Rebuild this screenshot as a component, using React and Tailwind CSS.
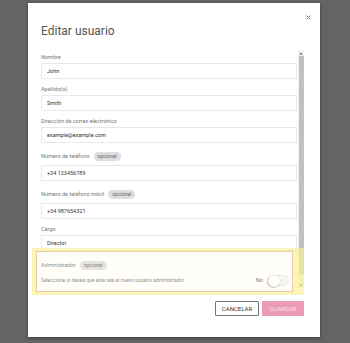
import React from "react";

function Badge() {
  return (
    <span className="ml-[4px] inline-flex h-[9px] items-center rounded-full bg-[#dedede] px-[4px] text-[5px] leading-none text-[#666]">
      opcional
    </span>
  );
}

function Field({ label, value, optional, first }) {
  return (
    <div className={first ? "" : "mt-[6px]"}>
      <div
        className={`flex items-center text-[5.5px] text-[#777] ${
          optional ? "h-[14px]" : "h-[8px]"
        }`}
      >
        {label}
        {optional && <Badge />}
      </div>
      <div className="mt-[2px] flex h-[16px] items-center border border-[#e8e8e8] px-[5px] text-[5.5px] text-[#333]">
        {value}
      </div>
    </div>
  );
}

function ScrollBar() {
  return (
    <div className="flex w-[6px] shrink-0 flex-col bg-[#f1f1f1]">
      <div className="flex h-[6px] items-center justify-center">
        <svg width="4" height="3" viewBox="0 0 4 3">
          <path d="M2 0.5L3.5 2.5H0.5Z" fill="#505050" />
        </svg>
      </div>
      <div className="flex flex-1 flex-col px-[0.5px]">
        <div className="h-[219px] bg-[#c1c1c1]" />
      </div>
      <div className="flex h-[6px] items-center justify-center">
        <svg width="4" height="3" viewBox="0 0 4 3">
          <path d="M2 2.5L3.5 0.5H0.5Z" fill="#505050" />
        </svg>
      </div>
    </div>
  );
}

export default function App() {
  return (
    <div className="min-h-[343px] bg-[#636466] pl-[28px] pt-[3px] font-['Roboto',sans-serif]">
      <div className="relative flex h-[334px] w-[292px] flex-col bg-white pl-[13px] pr-[16px] pt-[21px] shadow-[0_1px_3px_rgba(0,0,0,0.4)]">
        <button className="absolute right-[9px] top-[11px] flex h-[6px] w-[6px] items-center justify-center">
          <svg width="5" height="5" viewBox="0 0 5 5">
            <path d="M0.5 0.5L4.5 4.5M4.5 0.5L0.5 4.5" stroke="#a8627a" strokeWidth="1" />
          </svg>
        </button>

        <h2 className="text-[12px] font-normal leading-[14px] text-[#555]">Editar usuario</h2>

        <div className="mt-[12px] flex h-[238px] gap-[1px]">
          <div className="min-w-0 flex-1 overflow-hidden pt-[3px]">
            <Field first label="Nombre" value="John" />
            <Field label="Apellido(s)" value="Smith" />
            <Field label="Dirección de correo electrónico" value="example@example.com" />
            <Field label="Número de teléfono" value="+34 123456789" optional />
            <Field label="Número de teléfono móvil" value="+34 987654321" optional />
            <Field label="Cargo" value="Director" />

            <div className="mt-[7px] pb-[7px]">
              <div className="flex h-[14px] items-center text-[5.5px] text-[#777]">
                Administrador
                <Badge />
              </div>
              <div className="mt-[2px] flex h-[13px] items-center justify-between pr-[8px]">
                <span className="text-[5px] text-[#777]">
                  Seleccione si desea que este sea el nuevo usuario administrador
                </span>
                <div className="flex items-center">
                  <span className="mr-[5px] text-[5.5px] text-[#555]">No</span>
                  <div className="relative h-[11px] w-[21px] rounded-full border border-[#e2e2e2] bg-[#f4f4f4]">
                    <span className="absolute left-[-1px] top-[-1px] h-[12px] w-[12px] rounded-full bg-white shadow-[-0.5px_0.5px_1.5px_rgba(0,0,0,0.55)]" />
                  </div>
                </div>
              </div>
            </div>
          </div>
          <ScrollBar />
        </div>

        <div className="mt-[13px] flex justify-end gap-[3px]">
          <button className="flex h-[15px] w-[44px] items-center justify-center rounded-[1px] border border-[#777] bg-white text-[6px] text-[#333]">
            CANCELAR
          </button>
          <button className="flex h-[15px] w-[42px] items-center justify-center rounded-[1px] bg-[#eb9ab7] text-[6px] text-white/70">
            GUARDAR
          </button>
        </div>

        {/* tour highlight over the admin section */}
        <div className="pointer-events-none absolute left-[4px] top-[245px] h-[47px] w-[272px] border-b-[3px] border-l-[4px] border-r-[11px] border-t-[3px] border-[#f8ee8a]/60 bg-[#fffbe0]/20">
          <div className="h-full w-full border border-[#f2c9a6]" />
        </div>
      </div>
    </div>
  );
}
